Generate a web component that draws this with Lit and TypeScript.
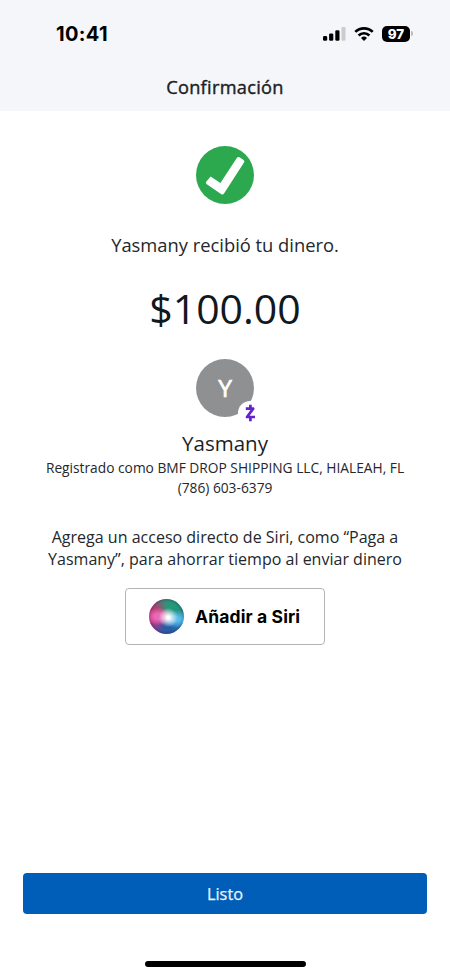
import { LitElement, html, css } from "lit";
import { customElement, property } from "lit/decorators.js";

@customElement("status-bar")
class StatusBar extends LitElement {
  @property() time = "";
  @property() battery = "";

  static styles = css`
    :host {
      display: flex;
      height: 67px;
      align-items: center;
      justify-content: space-between;
      padding: 0 37px 0 56px;
      box-sizing: border-box;
      font-family: Inter, "Liberation Sans", sans-serif;
    }
    .time {
      font-size: 20px;
      font-weight: 700;
      line-height: 24px;
      letter-spacing: 0.35px;
      color: #000;
    }
    .icons {
      display: flex;
      align-items: center;
    }
    .signal { width: 23px; height: 16px; }
    .wifi { width: 20px; height: 16px; margin-left: 8px; }
    .level {
      margin-left: 8px;
      width: 28px;
      height: 16px;
      border-radius: 5px;
      background: #000;
      color: #fff;
      font-size: 13.4px;
      font-weight: 800;
      line-height: 16px;
      text-align: center;
    }
    .tip {
      width: 2px;
      height: 5px;
      margin-left: 1px;
      border-radius: 0 2px 2px 0;
      background: #b9bbbd;
    }
  `;

  render() {
    return html`
      <span class="time">${this.time}</span>
      <div class="icons">
        <svg class="signal" viewBox="0 0 23 16">
          <rect x="0" y="10.1" width="4.2" height="4.7" rx="1.3" />
          <rect x="6.1" y="7.4" width="4.2" height="7.4" rx="1.3" />
          <rect x="12.3" y="4.2" width="4.2" height="10.6" rx="1.3" />
          <rect x="18.5" y="1" width="4" height="13.8" rx="1.2" fill="#cbcccd" />
        </svg>
        <svg class="wifi" viewBox="0 0 20 16" fill="none" stroke="#000" stroke-width="2.7">
          <path d="M1.3 5.9 A12.4 12.4 0 0 1 18.7 5.9" />
          <path d="M4.6 9.5 A7.6 7.6 0 0 1 15.4 9.5" />
          <path d="M10 14.9 L7 11.9 A4.3 4.3 0 0 1 13 11.9 Z" fill="#000" stroke="none" />
        </svg>
        <div class="level">${this.battery}</div>
        <div class="tip"></div>
      </div>
    `;
  }
}

@customElement("siri-button")
class SiriButton extends LitElement {
  static styles = css`
    :host { display: block; }
    button {
      display: flex;
      align-items: center;
      width: 200px;
      height: 57px;
      padding: 0 0 0 23px;
      box-sizing: border-box;
      border: 1.4px solid #b4b4b6;
      border-radius: 4px;
      background: #fff;
      font-family: Inter, "Liberation Sans", sans-serif;
      font-size: 17.5px;
      font-weight: 700;
      letter-spacing: 0.12px;
      color: #000;
      white-space: nowrap;
    }
    .orb {
      width: 35px;
      height: 35px;
      margin-right: 11px;
      border-radius: 50%;
      background:
        radial-gradient(circle at 55% 53%, #fff 0 5%, rgba(255, 255, 255, 0.7) 14%, rgba(255, 255, 255, 0) 36%),
        radial-gradient(ellipse at 28% 50%, rgba(232, 110, 185, 0.95) 0 12%, rgba(222, 80, 155, 0) 36%),
        radial-gradient(ellipse at 79% 57%, rgba(90, 190, 235, 0.95) 0 8%, rgba(60, 160, 220, 0) 32%),
        radial-gradient(circle, rgba(20, 30, 70, 0) 58%, rgba(40, 20, 80, 0.3) 71%),
        conic-gradient(from 0deg at 50% 50%, #2f9478 0deg, #1f9b78 40deg, #258c8b 80deg, #2f85bd 110deg,
          #245fa8 160deg, #34589f 195deg, #7a4496 222deg, #cf2f7c 258deg, #c0356f 300deg, #7d5f74 328deg, #2f9478 360deg);
    }
  `;

  render() {
    return html`<button><span class="orb"></span><slot></slot></button>`;
  }
}

@customElement("app-root")
class AppRoot extends LitElement {
  static styles = css`
    :host {
      display: flex;
      flex-direction: column;
      width: 450px;
      height: 976px;
      overflow: hidden;
      background: #fff;
      color: #24272c;
      font-family: "Open Sans", "Noto Sans", sans-serif;
      text-align: center;
    }
    header {
      height: 111px;
      background: #f4f6f9;
    }
    h1 {
      margin: 8px 0 0;
      font-size: 18.2px;
      font-weight: 400;
      line-height: 24px;
      letter-spacing: 0.3px;
      -webkit-text-stroke: 0.4px #1b1f25;
      color: #1b1f25;
    }
    main {
      flex: 1;
      display: flex;
      flex-direction: column;
      align-items: center;
      padding-top: 35px;
      white-space: nowrap;
    }
    .check { width: 58px; height: 58px; }
    .message { margin-top: 28px; font-size: 18.35px; line-height: 26px; }
    .amount { margin-top: 22px; font-size: 41px; line-height: 56px; color: #101820; }
    .avatar {
      position: relative;
      margin-top: 23px;
      width: 58px;
      height: 58px;
      border-radius: 50%;
      background: #8f9092;
      color: #fff;
      font-size: 24.5px;
      -webkit-text-stroke: 0.7px #fff;
      line-height: 58px;
    }
    .badge {
      position: absolute;
      left: 42px;
      top: 42px;
      width: 24px;
      height: 24px;
    }
    .name { margin-top: 13px; font-size: 20.5px; line-height: 26px; color: #1b1f25; }
    .detail { font-size: 13.75px; line-height: 20px; }
    .name + .detail { margin-top: 2px; }
    .hint { margin-top: 28px; font-size: 16.03px; line-height: 22px; }
    siri-button { margin-top: 18px; }
    footer {
      display: flex;
      flex-direction: column;
      align-items: center;
      padding: 0 23px 9px;
    }
    .done {
      width: 100%;
      height: 41px;
      padding: 1px 0 0;
      border: 0;
      border-radius: 4px;
      background: #005eb8;
      color: #e9f3ff;
      font-family: inherit;
      font-size: 16.3px;
      -webkit-text-stroke: 0.25px #e9f3ff;
      line-height: 40px;
    }
    .home {
      width: 161px;
      height: 6px;
      margin-top: 47px;
      border-radius: 3px;
      background: #000;
    }
  `;

  render() {
    return html`
      <header>
        <status-bar time="10:41" battery="97"></status-bar>
        <h1>Confirmación</h1>
      </header>
      <main>
        <svg class="check" viewBox="0 0 58 58">
          <circle cx="29" cy="29" r="29" fill="#2ca84f" />
          <path
            d="M10 36.1 L14.6 30.5 L24.4 37 L40.8 12 Q42 10.4 43.5 11.3 L47.6 14 Q49 15 48 16.6 L28.2 47.2 Q26.9 49.2 25 47.9 L10.8 38.2 Q9.4 37.2 10 36.1 Z"
            fill="#fff"
          />
        </svg>
        <div class="message">Yasmany recibió tu dinero.</div>
        <div class="amount">$100.00</div>
        <div class="avatar">
          Y
          <svg class="badge" viewBox="0 0 24 24">
            <circle cx="12" cy="12" r="12" fill="#fff" />
            <path
              d="M7.8 7.6 H15.2 L9 16 H17 M12.4 3.8 V7.6 M12.4 16 V20.2"
              fill="none" stroke="#6222cf" stroke-width="2.7" stroke-linejoin="round"
            />
          </svg>
        </div>
        <div class="name">Yasmany</div>
        <div class="detail">Registrado como BMF DROP SHIPPING LLC, HIALEAH, FL</div>
        <div class="detail">(786) 603-6379</div>
        <div class="hint">
          Agrega un acceso directo de Siri, como “Paga a<br />Yasmany”, para ahorrar tiempo al enviar dinero
        </div>
        <siri-button>Añadir a Siri</siri-button>
      </main>
      <footer>
        <button class="done">Listo</button>
        <div class="home"></div>
      </footer>
    `;
  }
}
